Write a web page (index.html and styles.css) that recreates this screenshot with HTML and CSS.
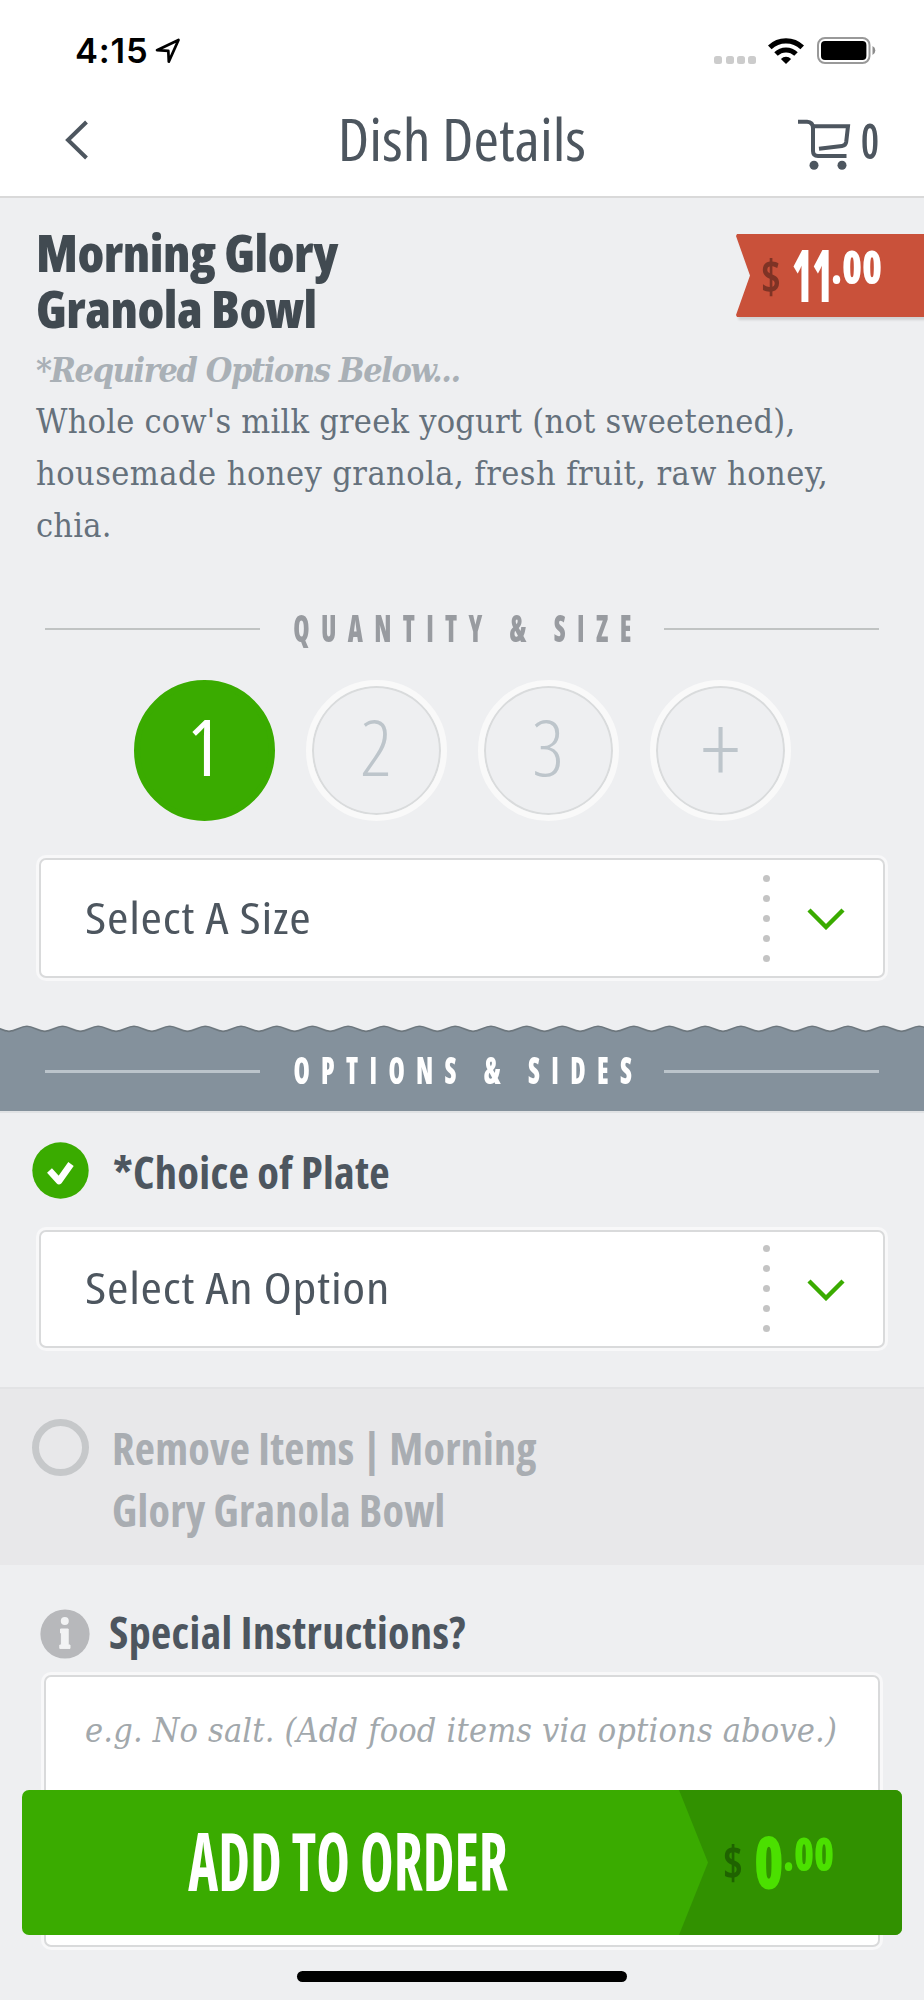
FILE: index.html
```html
<!DOCTYPE html>
<html lang="en">
<head>
<meta charset="utf-8">
<title>Dish Details</title>
<link rel="stylesheet" href="styles.css">
</head>
<body>
<div class="screen">
  <header class="top">
    <div class="status">
      <div class="clock">4:15
        <svg class="loc" width="26" height="26" viewBox="0 0 26 26"><path d="M2 12.2 L23.5 2 L13.8 23.6 L13.3 12.9 Z" fill="none" stroke="#000" stroke-width="2.7" stroke-linejoin="round"/></svg>
      </div>
      <div class="indicators">
        <span class="signal"><i></i><i></i><i></i><i></i></span>
        <svg class="wifi" width="36" height="26" viewBox="0 0 36 26"><path d="M1.8 9.4 A23.3 23.3 0 0 1 34.2 9.4" fill="none" stroke="#000" stroke-width="5.2"/><path d="M8 16 A14.4 14.4 0 0 1 28 16" fill="none" stroke="#000" stroke-width="5"/><path d="M18 26 L12.9 20.9 A7.4 7.4 0 0 1 23.1 20.9 Z"/></svg>
        <svg class="battery" width="59" height="27" viewBox="0 0 59 27"><rect x="1" y="1" width="51.5" height="25" rx="7" fill="none" stroke="#999" stroke-width="2"/><rect x="4" y="4" width="45.4" height="19" rx="4"/><path d="M55.5 9 A5 5 0 0 1 55.5 18 Z" fill="#8c8c8c"/></svg>
      </div>
    </div>
    <nav class="nav">
      <svg class="back" width="24" height="40" viewBox="0 0 24 40"><path d="M21.5 2 L3 20 L21.5 38" fill="none" stroke="#4d565f" stroke-width="4"/></svg>
      <h1 class="page-title">Dish Details</h1>
      <div class="cart">
        <svg width="54" height="52" viewBox="0 0 54 52"><g fill="none" stroke="#4d565f" stroke-width="4"><path d="M0 2.8 H9 Q15 3.2 15 9 V32 Q15 37 20 37 H48.5"/><path d="M15 7.3 H50 L48.2 23 Q47.7 26.5 44 27 L21 29.8"/></g><circle cx="16" cy="46.3" r="4.5" fill="#4d565f"/><circle cx="44" cy="46.3" r="4.5" fill="#4d565f"/></svg>
        <span class="cart-count">0</span>
      </div>
    </nav>
  </header>

  <main>
    <section class="dish">
      <div class="dish-head">
        <h2 class="dish-name">Morning Glory<br>Granola Bowl</h2>
        <div class="tag">
          <div class="tag-face">
            <span class="price-sign">$</span><span class="price-main price-eleven">11</span><span class="price-cents">.00</span>
          </div>
        </div>
      </div>
      <p class="required">*Required Options Below...</p>
      <p class="desc">Whole cow's milk greek yogurt (not sweetened),<br><span class="desc-wide">housemade honey granola, fresh fruit, raw honey,</span><br>chia.</p>
    </section>

    <section class="quantity">
      <div class="rule-head"><i></i><h3><span>QUANTITY &amp; SIZE</span></h3><i></i></div>
      <div class="amounts">
        <button class="amount amount-on"><span>1</span></button>
        <button class="amount"><span>2</span></button>
        <button class="amount"><span>3</span></button>
        <button class="amount"><span class="plus">+</span></button>
      </div>
      <div class="select">
        <span class="select-text">Select A Size</span>
        <span class="dots"><i></i><i></i><i></i><i></i><i></i></span>
        <svg class="chevron" width="38" height="22" viewBox="0 0 38 22"><path d="M2 2 L19 19 L36 2" fill="none" stroke="#3aab00" stroke-width="4.4"/></svg>
      </div>
    </section>

    <section class="band">
      <svg class="wave" width="924" height="10" viewBox="0 0 924 10">
        <defs><pattern id="wave" x="9" width="35.7" height="10" patternUnits="userSpaceOnUse"><path d="M-1 6.4 H0 C7 6.4 11 1.3 17.85 1.3 S28.7 6.4 35.7 6.4 H37 V11 H-1 Z" fill="#84919c"/><path d="M-1 6.4 H0 C7 6.4 11 1.3 17.85 1.3 S28.7 6.4 35.7 6.4 H37" fill="none" stroke="#6c767d" stroke-width="1.6"/></pattern></defs>
        <rect width="924" height="10" fill="url(#wave)"/>
      </svg>
      <div class="band-body">
        <div class="rule-head rule-head-light"><i></i><h3><span>OPTIONS &amp; SIDES</span></h3><i></i></div>
      </div>
    </section>

    <section class="choice">
      <div class="choice-head">
        <svg width="57" height="57" viewBox="0 0 57 57"><circle cx="28.5" cy="28.5" r="28.2" fill="#3aab00"/><path d="M17.5 28.5 L27 39 L39 22" fill="none" stroke="#fff" stroke-width="6.6" stroke-linejoin="round"/></svg>
        <h4 class="label">*Choice of Plate</h4>
      </div>
      <div class="select select-option">
        <span class="select-text">Select An Option</span>
        <span class="dots"><i></i><i></i><i></i><i></i><i></i></span>
        <svg class="chevron" width="38" height="22" viewBox="0 0 38 22"><path d="M2 2 L19 19 L36 2" fill="none" stroke="#3aab00" stroke-width="4.4"/></svg>
      </div>
    </section>

    <section class="remove">
      <span class="radio"></span>
      <h4 class="label label-muted">Remove Items | Morning<br>Glory Granola Bowl</h4>
    </section>

    <section class="special">
      <div class="special-head">
        <svg width="50" height="50" viewBox="0 0 50 50"><circle cx="25" cy="25" r="24.6" fill="#b7b8bb"/><circle cx="24.8" cy="12" r="4" fill="#f2f3f4"/><path d="M20.5 20 H28.2 V36 H30 V39.4 H19.8 V36 H21.4 V24 H20.5 Z" fill="#f2f3f4" stroke="#f2f3f4" stroke-linejoin="round"/></svg>
        <h4 class="label label-special">Special Instructions?</h4>
      </div>
      <div class="notes">e.g. No salt. (Add food items via options above.)</div>
    </section>
  </main>

  <button class="order">
    <span class="order-text"><span>ADD TO ORDER</span></span>
    <span class="order-price">
      <span class="price-sign">$</span><span class="price-main price-zero">0</span><span class="price-cents">.00</span>
    </span>
  </button>
  <div class="home"></div>
</div>
</body>
</html>
```
FILE: styles.css
```css
* { box-sizing: border-box; }
body { margin: 0; background: #eeeff1; font-family: "Open Sans", sans-serif; font-stretch: 75%; color: #4d565f; }
h1, h2, h3, h4, p { margin: 0; }
button { border: 0; padding: 0; background: none; font: inherit; color: inherit; }
svg { display: block; flex: none; }
.screen { position: relative; width: 924px; height: 2000px; overflow: hidden; background: #eeeff1; }

/* Status bar and navigation */
.top { height: 198px; background: #fff; border-bottom: 2px solid #d9d9d9; }
.status { height: 101px; padding: 0 48px 0 75px; display: flex; justify-content: space-between; align-items: center; }
.clock { display: flex; align-items: center; gap: 7px; font: 600 34.5px/40px Inter, sans-serif; letter-spacing: .8px; color: #000; }
.indicators { display: flex; align-items: center; }
.signal { display: flex; gap: 3.2px; margin: 19px 12px 0 0; }
.signal i { width: 8px; height: 8px; border-radius: 2.5px; background: #ccc; }
.battery { margin-left: 13px; }
.nav { height: 74px; padding: 0 46px 0 65px; display: grid; grid-template-columns: 200px 1fr 219px; align-items: center; }
.back { margin-top: 4px; }
.page-title { text-align: center; font-size: 59px; font-weight: 400; line-height: 74px; white-space: nowrap; margin-left: -19px; padding-left: 18px; transform: scaleX(1.045); }
.cart { display: flex; align-items: center; margin-left: 158px; }
.cart svg { margin-top: 13px; transform: translateX(-19px); }
.cart-count { font-size: 49px; font-weight: 600; line-height: 66px; margin: 4px 0 0 -12px; transform: scaleX(.84); }

/* Dish summary */
.dish { padding: 26px 0 0 36px; }
.dish-head { display: flex; justify-content: space-between; align-items: flex-start; height: 111px; }
.dish-name { font-size: 52px; font-weight: 800; line-height: 56px; letter-spacing: -.5px; color: #414a51; }
.tag { margin-top: 10px; filter: drop-shadow(2px 3px 1px rgba(0, 0, 0, .12)); }
.tag-face { width: 188px; height: 83px; padding-left: 25px; display: flex; align-items: flex-start; background: #c9513a; color: #fff; clip-path: polygon(1px 0, 100% 0, 100% 100%, 1px 100%, 0 81px, 14px 50%, 0 2px); }
.required { margin-top: 10px; font: italic 700 34px/50px "DejaVu Serif Condensed", "DejaVu Serif", serif; letter-spacing: -1.4px; color: #a9b0b6; }
.desc { font: 400 34px/52px "DejaVu Serif Condensed", "DejaVu Serif", serif; letter-spacing: .22px; color: #65717c; white-space: nowrap; }
.desc-wide { letter-spacing: .45px; }

/* Prices */
.price-sign { width: 31px; font-size: 46px; font-weight: 700; line-height: 83px; transform: scaleX(.92); transform-origin: 0 50%; color: #7e3325; }
.price-main { font-size: 73px; font-weight: 800; line-height: 79px; transform-origin: 0 50%; }
.price-eleven { width: 39px; transform: scaleX(.56); }
.price-zero { width: 29px; transform: scaleX(.82); }
.price-cents { font-size: 46px; font-weight: 800; line-height: 65px; transform: scaleX(.88); transform-origin: 0 50%; }

/* Headings between two rules */
.rule-head { height: 40px; padding: 0 45px; display: flex; align-items: center; }
.rule-head i { flex: none; width: 215px; height: 2.4px; background: #c0c3c3; }
.rule-head h3 { flex: 1; min-width: 0; display: flex; justify-content: center; font-size: 37.5px; font-weight: 800; line-height: 40px; color: #989ba0; }
.rule-head span { flex: none; white-space: nowrap; letter-spacing: 16.2px; margin: -3px -17.2px 0 0; transform: scaleX(.7); transform-origin: calc(50% - 8.2px) 50%; }
.rule-head-light i { background: #bbc4cb; }
.rule-head-light h3 { color: #fff; }

/* Quantity */
.quantity { padding-top: 58px; }
.amounts { display: flex; justify-content: center; gap: 31px; margin-top: 31px; }
.amount { width: 141px; height: 141px; border: 6px solid #f9f9f9; border-radius: 50%; box-shadow: inset 0 0 0 2px #d9dbdc; font-size: 78px; font-weight: 300; line-height: 129px; color: #bdc5cb; }
.amount span { display: block; margin-top: -8px; }
.amount .plus { transform: scale(1.25); margin-top: -7px; }
.amount-on { background: #3aab00; border-color: #3aab00; box-shadow: none; color: #fff; font-weight: 500; }

/* Select boxes */
.select { height: 120px; margin: 37px 39px 0; padding: 0 38px 0 44px; display: flex; align-items: center; background: #fff; border: 2px solid #d9dadb; border-radius: 7px; box-shadow: 0 0 0 3px #f8f8f9; }
.select-text { flex: 1; font-size: 44.5px; line-height: 60px; letter-spacing: .6px; margin-top: -3px; transform: scaleX(1.167); transform-origin: 0 50%; }
.dots { display: flex; flex-direction: column; gap: 13px; margin-right: 37px; }
.dots i { width: 7px; height: 7px; border-radius: 50%; background: #c4c4c4; }
.chevron { margin-top: 2px; }
.select-option { height: 118px; margin-top: 31px; }

/* Options band */
.band { margin-top: 47px; }
.band-body { height: 76px; padding-top: 17px; margin-top: -.5px; background: #84919c; box-shadow: 0 2px 0 #e0e2e4; }

.label { font-size: 44.5px; font-weight: 700; line-height: 60px; letter-spacing: .25px; white-space: nowrap; }
.choice { padding-top: 32px; }
.choice-head { height: 56px; padding-left: 32px; display: flex; align-items: center; gap: 24px; }
.choice-head .label { margin-top: 2px; }

.remove { height: 178px; margin-top: 39px; padding: 32px 0 0 32px; display: flex; gap: 23px; background: #e8e8ea; border-top: 2px solid #e2e3e5; }
.radio { flex: none; width: 57px; height: 57px; border: 7px solid #c6c8ca; border-radius: 50%; margin-top: -2px; }
.label-muted { font-size: 44px; line-height: 62px; letter-spacing: .25px; margin-top: -4px; color: #a9adb2; }

.special { padding-top: 44px; }
.special-head { height: 50px; padding-left: 40px; display: flex; align-items: center; gap: 19px; }
.label-special { font-size: 44px; letter-spacing: .4px; margin-top: -4px; }
.notes { height: 272px; margin: 16px 44px 0; padding: 28px 39px; background: #fff; border: 2px solid #d9dadb; border-radius: 7px; box-shadow: 0 0 0 3px #f8f8f9; font: italic 400 34px/50px "DejaVu Serif Condensed", "DejaVu Serif", serif; letter-spacing: .17px; white-space: nowrap; color: #a2a8ac; }

/* Order bar floats over the page */
.order { position: absolute; left: 22px; top: 1790px; width: 880px; height: 145px; display: flex; align-items: flex-start; border-radius: 7px; overflow: hidden; background: #3aab00; color: #fff; }
.order-text { flex: none; width: 652px; height: 145px; display: flex; justify-content: center; font-size: 80px; font-weight: 700; line-height: 139px; }
.order-text span { flex: none; white-space: nowrap; transform: scaleX(.71); }
.order-price { width: 229px; height: 145px; margin-left: 5px; padding-left: 44px; display: flex; align-items: flex-start; text-align: left; background: #319100; color: #4be000; clip-path: polygon(0 0, 100% 0, 100% 100%, 0 100%, 29px 50%); }
.order-price .price-sign { line-height: 143px; color: #1f6300; }
.order-price .price-main { line-height: 142px; }
.order-price .price-cents { line-height: 127px; }

.home { position: absolute; left: 297px; top: 1971px; width: 330px; height: 11px; border-radius: 6px; background: #000; }
```
